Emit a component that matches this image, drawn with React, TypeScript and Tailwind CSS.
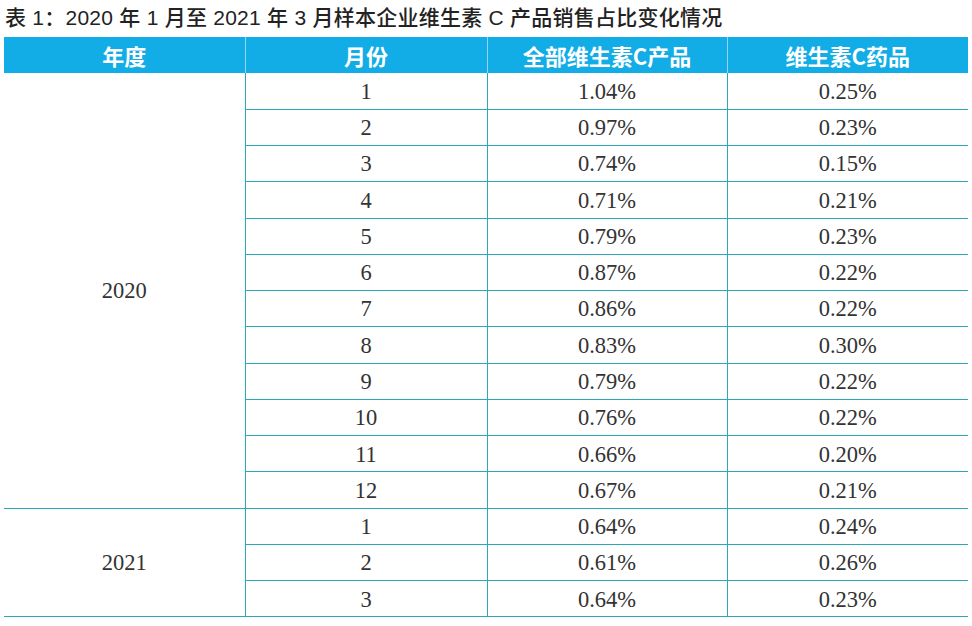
import React from "react";

const rows2020 = [
  ["1", "1.04%", "0.25%"],
  ["2", "0.97%", "0.23%"],
  ["3", "0.74%", "0.15%"],
  ["4", "0.71%", "0.21%"],
  ["5", "0.79%", "0.23%"],
  ["6", "0.87%", "0.22%"],
  ["7", "0.86%", "0.22%"],
  ["8", "0.83%", "0.30%"],
  ["9", "0.79%", "0.22%"],
  ["10", "0.76%", "0.22%"],
  ["11", "0.66%", "0.20%"],
  ["12", "0.67%", "0.21%"],
];

const rows2021 = [
  ["1", "0.64%", "0.24%"],
  ["2", "0.61%", "0.26%"],
  ["3", "0.64%", "0.23%"],
];

const groups = [
  { year: "2020", rows: rows2020 },
  { year: "2021", rows: rows2021 },
];

export default function App() {
  return (
    <div className="w-[972px] h-[626px] bg-white overflow-hidden">
      <h1 className="pl-[5px] pt-[3px] h-[37px] text-[21px] leading-[30px] text-[#222] font-['Liberation_Sans','Noto_Sans_CJK_SC',sans-serif] font-medium tracking-[0.25px]">
        表 1：2020 年 1 月至 2021 年 3 月样本企业维生素 C 产品销售占比变化情况
      </h1>
      <table className="ml-[4px] w-[964px] border-collapse table-fixed">
        <colgroup>
          <col className="w-[241px]" />
          <col className="w-[242px]" />
          <col className="w-[240px]" />
          <col className="w-[241px]" />
        </colgroup>
        <thead>
          <tr className="h-[36px] bg-[#12ade6] text-white text-[22px] font-bold font-['Noto_Sans_CJK_SC',sans-serif]">
            <th className="p-0 font-bold">年度</th>
            <th className="p-0 font-bold border-l border-[#8fd8f3]">月份</th>
            <th className="p-0 font-bold border-l border-[#8fd8f3]">全部维生素C产品</th>
            <th className="p-0 font-bold border-l border-[#8fd8f3]">维生素C药品</th>
          </tr>
        </thead>
        <tbody className="text-[22.5px] leading-none text-[#333] font-['Liberation_Serif','Noto_Sans_CJK_SC',serif]">
          {groups.map((g) =>
            g.rows.map((r, i) => (
              <tr key={g.year + r[0]} className="h-[36.27px]">
                {i === 0 && (
                  <td
                    rowSpan={g.rows.length}
                    className="p-0 pt-[2px] text-center border-b border-[#27a9b9]"
                  >
                    {g.year}
                  </td>
                )}
                <td className="p-0 pt-[2px] text-center border-l border-b border-[#27a9b9]">{r[0]}</td>
                <td className="p-0 pt-[2px] text-center border-l border-b border-[#27a9b9]">{r[1]}</td>
                <td className="p-0 pt-[2px] text-center border-l border-b border-[#27a9b9]">{r[2]}</td>
              </tr>
            ))
          )}
        </tbody>
      </table>
    </div>
  );
}
